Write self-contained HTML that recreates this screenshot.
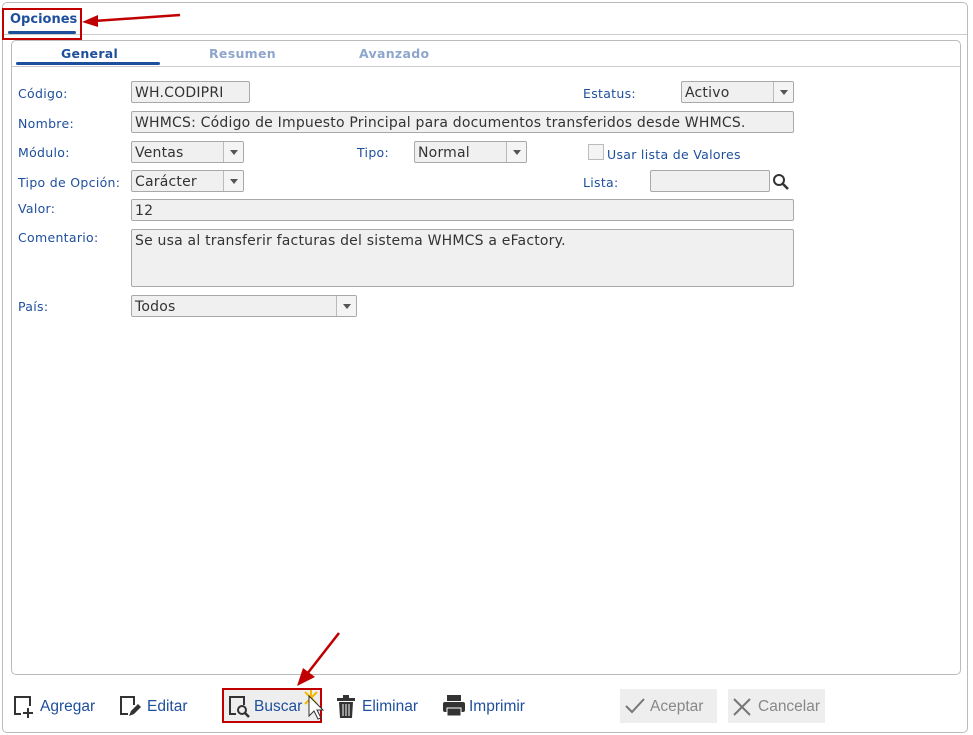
<!DOCTYPE html>
<html><head><meta charset="utf-8"><style>
*{box-sizing:border-box;margin:0;padding:0}
body{width:973px;height:735px;background:#fff;font-family:"DejaVu Sans","Liberation Sans",sans-serif;position:relative;overflow:hidden}
.a{position:absolute}
.lbl{position:absolute;font-size:12.5px;color:#1e4f9c;letter-spacing:0.3px}
.inp{position:absolute;background:#f0f0f0;border:1px solid #a9a9a9;border-radius:2px;font-size:14px;color:#333;padding:2px 3px;height:22px;line-height:18px;white-space:nowrap;overflow:hidden;letter-spacing:0.2px}
.dd{position:absolute;right:0;top:0;width:20px;height:20px;border-left:1px solid #bbb;background:#f4f4f4}
.dd:after{content:"";position:absolute;left:6px;top:8px;border-left:4px solid transparent;border-right:4px solid transparent;border-top:5px solid #555}
.btn{position:absolute;font-size:15.5px;color:#1e4f9c;font-family:"Liberation Sans",sans-serif}
</style></head><body>
<div class="a" style="left:2px;top:2px;width:966px;height:731px;border:1px solid #bbb;border-radius:5px"></div>
<div class="a" style="left:3px;top:34px;width:964px;border-top:1px solid #ccc"></div>
<div class="a" style="left:10px;top:12px;font-size:13px;font-weight:bold;color:#1e4f9c">Opciones</div>
<div class="a" style="left:8px;top:31px;width:68px;height:3px;background:#1e4f9c;border-radius:2px"></div>
<div class="a" style="left:2px;top:8px;width:80px;height:32px;border:2px solid #c00000"></div>
<svg class="a" style="left:80px;top:10px" width="105" height="22"><line x1="100" y1="5" x2="14" y2="11" stroke="#c00000" stroke-width="2.5"/><polygon points="2,12 18,5 18,17" fill="#c00000"/></svg>
<div class="a" style="left:11px;top:40px;width:950px;height:635px;border:1px solid #bbb;border-radius:5px"></div>
<div class="a" style="left:12px;top:66px;width:948px;border-top:1px solid #ccc"></div>
<div class="a" style="left:61px;top:46px;font-size:12.5px;font-weight:bold;color:#1e4f9c;letter-spacing:0.3px">General</div>
<div class="a" style="left:209px;top:46px;font-size:12.5px;font-weight:bold;color:#8ea6cc;letter-spacing:0.3px">Resumen</div>
<div class="a" style="left:359px;top:46px;font-size:12.5px;font-weight:bold;color:#8ea6cc;letter-spacing:0.3px">Avanzado</div>
<div class="a" style="left:16px;top:62px;width:144px;height:3px;background:#1e4f9c;border-radius:2px"></div>

<div class="lbl" style="left:18px;top:86px">Código:</div>
<div class="inp" style="left:131px;top:81px;width:119px">WH.CODIPRI</div>
<div class="lbl" style="left:583px;top:86px">Estatus:</div>
<div class="inp" style="left:681px;top:81px;width:113px">Activo<span class="dd"></span></div>
<div class="lbl" style="left:18px;top:116px">Nombre:</div>
<div class="inp" style="left:131px;top:111px;width:663px">WHMCS: Código de Impuesto Principal para documentos transferidos desde WHMCS.</div>
<div class="lbl" style="left:18px;top:145px">Módulo:</div>
<div class="inp" style="left:131px;top:141px;width:113px">Ventas<span class="dd"></span></div>
<div class="lbl" style="left:357px;top:145px">Tipo:</div>
<div class="inp" style="left:414px;top:141px;width:113px">Normal<span class="dd"></span></div>
<div class="a" style="left:588px;top:144px;width:16px;height:16px;border:1px solid #bbb;background:#f4f4f4"></div>
<div class="lbl" style="left:607px;top:147px;font-size:12.5px">Usar lista de Valores</div>
<div class="lbl" style="left:18px;top:175px">Tipo de Opción:</div>
<div class="inp" style="left:131px;top:170px;width:113px">Carácter<span class="dd"></span></div>
<div class="lbl" style="left:583px;top:175px">Lista:</div>
<div class="inp" style="left:650px;top:170px;width:120px"></div>
<svg class="a" style="left:772px;top:173px" width="18" height="18"><circle cx="7" cy="7" r="5" fill="none" stroke="#333" stroke-width="2"/><line x1="11" y1="11" x2="16" y2="16" stroke="#333" stroke-width="2.5"/></svg>
<div class="lbl" style="left:18px;top:201px">Valor:</div>
<div class="inp" style="left:131px;top:199px;width:663px">12</div>
<div class="lbl" style="left:18px;top:230px">Comentario:</div>
<div class="inp" style="left:131px;top:229px;width:663px;height:58px">Se usa al transferir facturas del sistema WHMCS a eFactory.</div>
<div class="lbl" style="left:18px;top:299px">País:</div>
<div class="inp" style="left:131px;top:295px;width:226px">Todos<span class="dd"></span></div>

<svg class="a" style="left:12px;top:694px" width="24" height="26"><path d="M9 20H3V3h15v9" fill="none" stroke="#333" stroke-width="2"/><path d="M16 14v10M11 19h10" stroke="#333" stroke-width="2"/></svg>
<div class="btn" style="left:40px;top:698px">Agregar</div>
<svg class="a" style="left:118px;top:694px" width="24" height="26"><path d="M10 20H3V3h13v8" fill="none" stroke="#333" stroke-width="2"/><path d="M11 22l2-5 7-7 3 3-7 7z" fill="#333"/></svg>
<div class="btn" style="left:147px;top:698px">Editar</div>
<div class="a" style="left:222px;top:688px;width:100px;height:35px;border:2px solid #c00000;background:#eee"></div>
<svg class="a" style="left:227px;top:694px" width="24" height="26"><path d="M9 20H3V3h14v8" fill="none" stroke="#333" stroke-width="2"/><circle cx="15" cy="16" r="4" fill="none" stroke="#333" stroke-width="2"/><line x1="18" y1="19" x2="22" y2="23" stroke="#333" stroke-width="2.5"/></svg>
<div class="btn" style="left:254px;top:698px">Buscar</div>
<svg class="a" style="left:293px;top:630px" width="52" height="96"><line x1="46" y1="3" x2="14" y2="44" stroke="#c00000" stroke-width="2.5"/><polygon points="4,56 10,38 22,47" fill="#c00000"/><path d="M16 68h4M18 60v16M12 62l12 12M24 62l-12 12" stroke="#f5b800" stroke-width="2"/><path d="M16 66v20l5-5 4 8 3-1-4-8h6z" fill="#fff" stroke="#333"/></svg>
<svg class="a" style="left:336px;top:695px" width="20" height="24"><rect x="1" y="3" width="18" height="3" fill="#333"/><rect x="7" y="0" width="6" height="3" fill="#333"/><path d="M3 7h14l-1 16H4z" fill="#333"/><path d="M7 9v12M10 9v12M13 9v12" stroke="#fff" stroke-width="1"/></svg>
<div class="btn" style="left:362px;top:698px">Eliminar</div>
<svg class="a" style="left:442px;top:694px" width="24" height="24"><rect x="5" y="1" width="14" height="6" fill="#333"/><rect x="1" y="8" width="22" height="10" rx="2" fill="#333"/><rect x="5" y="14" width="14" height="8" fill="#333" stroke="#fff" stroke-width="1"/></svg>
<div class="btn" style="left:469px;top:698px">Imprimir</div>
<div class="a" style="left:620px;top:689px;width:97px;height:34px;background:#eee"></div>
<svg class="a" style="left:624px;top:697px" width="22" height="18"><path d="M2 9l6 6L20 2" fill="none" stroke="#777" stroke-width="2"/></svg>
<div class="btn" style="left:650px;top:698px;color:#888">Aceptar</div>
<div class="a" style="left:728px;top:689px;width:97px;height:34px;background:#eee"></div>
<svg class="a" style="left:732px;top:697px" width="20" height="20"><path d="M2 2l16 16M18 2L2 18" stroke="#777" stroke-width="2"/></svg>
<div class="btn" style="left:758px;top:698px;color:#888">Cancelar</div>
</body></html>
